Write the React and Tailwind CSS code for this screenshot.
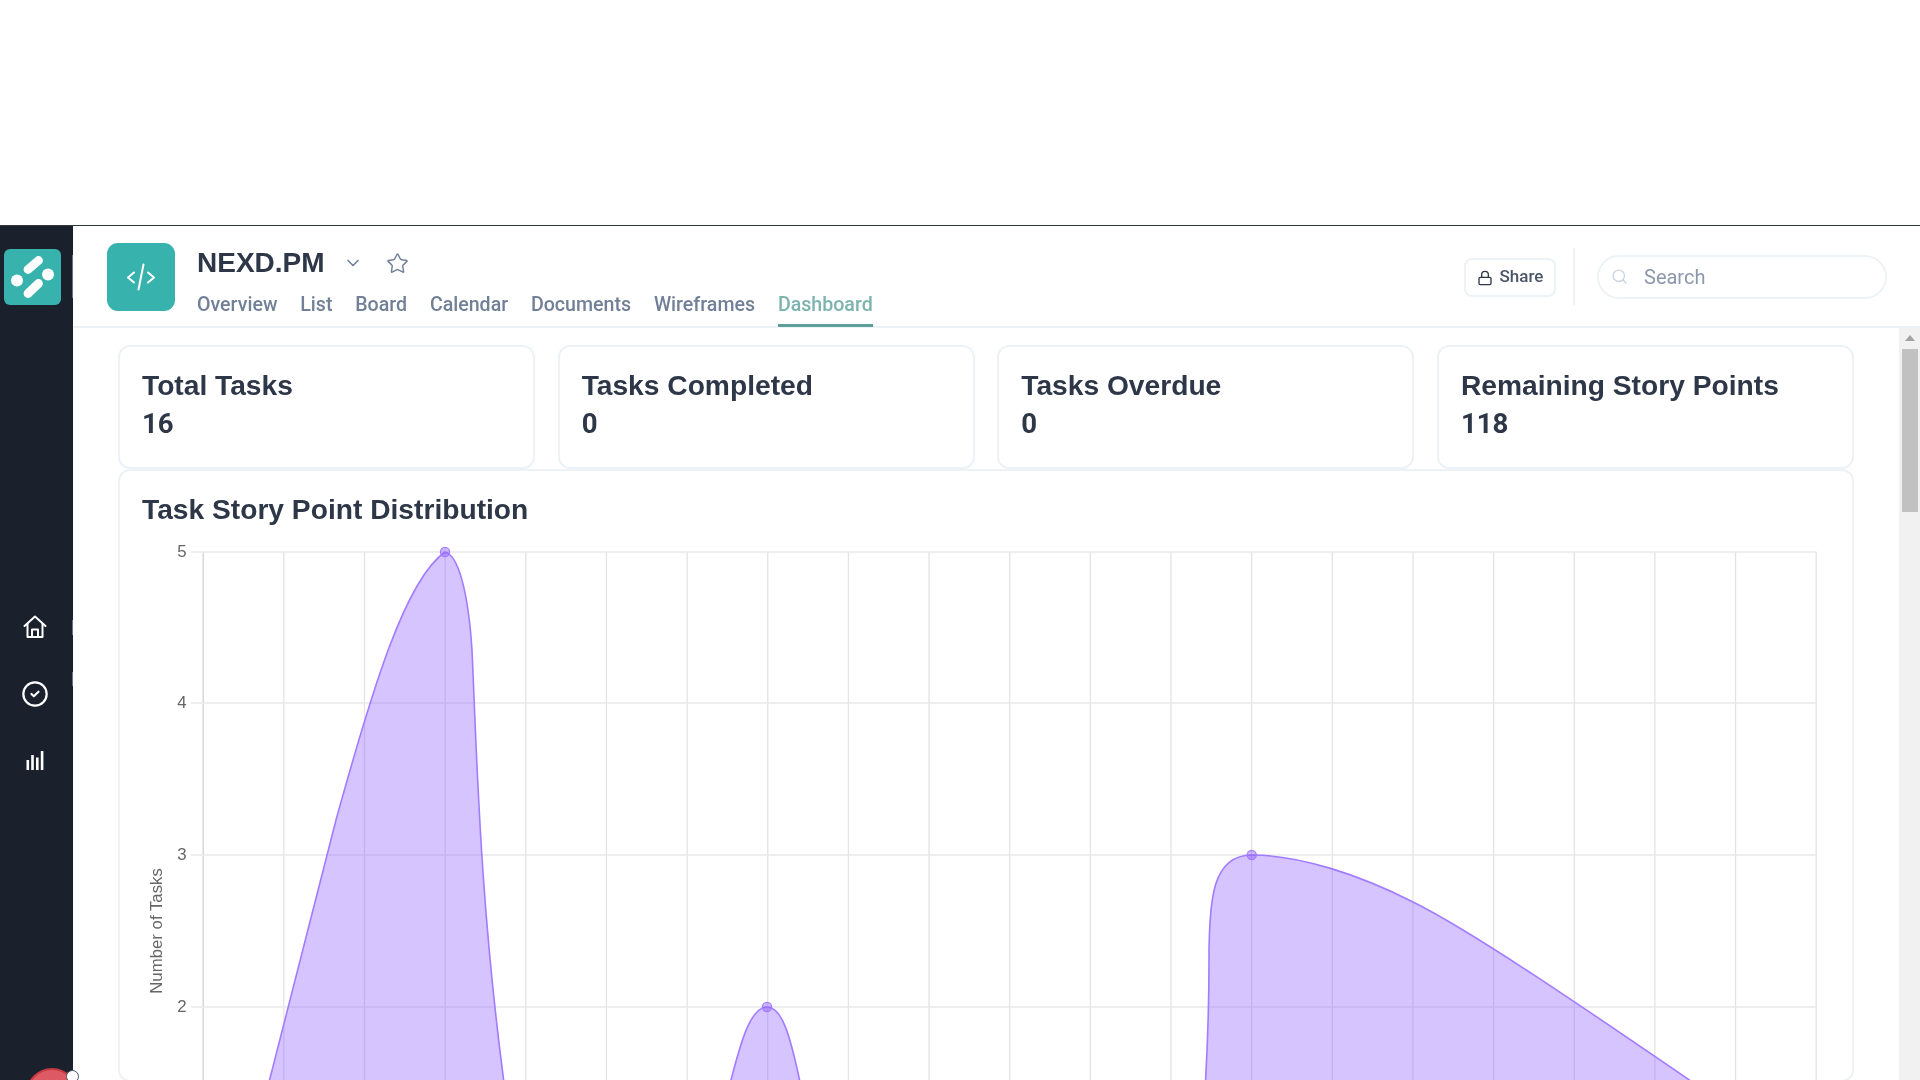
import React from "react";
import { ChevronDown, Star, Lock, Search, CircleCheck } from "lucide-react";

const tabs = ["Overview", "List", "Board", "Calendar", "Documents", "Wireframes", "Dashboard"];
const stats = [
  ["Total Tasks", "16"],
  ["Tasks Completed", "0"],
  ["Tasks Overdue", "0"],
  ["Remaining Story Points", "118"],
];
const gridX = Array.from({ length: 21 }, (_, i) => 203.2 + i * 80.65);
const ticks = [
  [5, 552],
  [4, 703],
  [3, 855],
  [2, 1007],
];
const peaks = [
  "M267 1090 L336 820 C372 690 405 580 445 552 C458 555 468 590 472 650 C477 760 480 905 505 1090 Z",
  "M728 1090 L730.5 1082 C740 1045 750 1007 767 1007 C782 1007 790 1035 800 1082 L803 1090 Z",
  "M1205 1090 C1208 1040 1209 1000 1209 960 C1209 900 1212 855 1251.7 855 C1300 855 1360 875 1413 902 C1470 930 1580 1005 1704 1090 Z",
];

function Chart() {
  return (
    <svg viewBox="120 529 1732 551" width="1732" height="551" className="block shrink-0">
      {gridX.map((x, i) => (
        <line key={x} x1={x} x2={x} y1="552" y2="1080" stroke={i === 0 ? "#d2d2d2" : "#e3e3e3"} strokeWidth="1.3" />
      ))}
      {ticks.map(([v, y]) => (
        <g key={v}>
          <line x1="191" x2="1816.5" y1={y} y2={y} stroke="#e8e8e8" strokeWidth="1.3" />
          <text x="186.5" y={y + 4.5} textAnchor="end" fontSize="16.8" fill="#666" fontFamily="'Liberation Sans', sans-serif">
            {v}
          </text>
        </g>
      ))}
      <text
        transform="translate(162 931) rotate(-90)"
        textAnchor="middle"
        fontSize="16.8"
        fill="#666"
        fontFamily="'Liberation Sans', sans-serif"
      >
        Number of Tasks
      </text>
      {peaks.map((d) => (
        <path key={d} d={d} fill="rgba(133,82,255,0.34)" stroke="#a27cff" strokeWidth="1.6" />
      ))}
      {[
        [445, 552],
        [767, 1007],
        [1251.7, 855],
      ].map(([cx, cy]) => (
        <circle key={cx} cx={cx} cy={cy} r="4.6" fill="rgba(139,92,246,0.45)" stroke="#a27cff" strokeWidth="1.2" />
      ))}
    </svg>
  );
}

function Logo() {
  return (
    <div className="ml-[4px] mt-[23px] h-[56px] w-[57px] rounded-[6px] bg-[#38b2ac]">
      <svg viewBox="0 0 57 56" width="57" height="56" className="block">
        <g stroke="#fff" strokeWidth="8.8" strokeLinecap="round">
          <line x1="24" y1="20.5" x2="34.5" y2="11.5" />
          <line x1="24" y1="44.5" x2="34.5" y2="34.5" />
        </g>
        <circle cx="13" cy="31.5" r="6" fill="#fff" />
        <circle cx="44" cy="25.5" r="6" fill="#fff" />
      </svg>
    </div>
  );
}

function Sidebar() {
  return (
    <aside className="relative flex h-full w-[73px] shrink-0 flex-col bg-[#1a202c]">
      <Logo />
      <div className="flex w-[70px] flex-col items-center pt-[310px]">
        <svg viewBox="0 0 24 24" width="24" height="24" fill="none" stroke="#fff" strokeWidth="2" strokeLinejoin="round" strokeLinecap="round">
          <path d="M1.5 11 12 1.5 22.5 11" />
          <path d="M4.5 9v13h15V9" />
          <path d="M9 22v-7.5h6V22" />
        </svg>
        <CircleCheck size={28} color="#fff" strokeWidth={1.9} className="mt-[41px]" />
        <svg viewBox="0 0 18 20" width="18" height="20" fill="#fff" className="mt-[42px]">
          <rect x="0.5" y="10" width="2.6" height="10" />
          <rect x="5.2" y="5" width="2.6" height="15" />
          <rect x="10" y="7.5" width="2.6" height="12.5" />
          <rect x="14.8" y="1" width="2.6" height="19" />
        </svg>
      </div>
      <div className="absolute left-[72px] top-[29px] h-[43px] w-[1px] bg-[#6b7280]" />
      <div className="absolute left-[72px] top-[394px] h-[15px] w-[1px] bg-[#6b7280]" />
      <div className="absolute left-[72px] top-[446px] h-[14px] w-[1px] bg-[#6b7280]" />
      <div className="absolute left-[26px] top-[842px] h-[52px] w-[52px] rounded-full border-2 border-[#c53b3f] bg-[#dd5a64]" />
      <div className="absolute left-[66px] top-[844px] z-10 h-[13px] w-[13px] rounded-full border border-[#4a5568] bg-white" />
    </aside>
  );
}

function Header() {
  return (
    <header className="flex h-[102px] shrink-0 items-start border-b-2 border-[#edf2f7] pl-[34px] pr-[33px]">
      <div className="mt-[17px] flex h-[68px] w-[68px] shrink-0 items-center justify-center rounded-[11px] bg-[#38b2ac]">
        <svg viewBox="0 0 30 28" width="30" height="28" fill="none" stroke="#fff" strokeWidth="2" strokeLinecap="round" strokeLinejoin="round">
          <path d="M8 9.5 2 14.5 8 19.5" />
          <path d="M22 9.5 28 14.5 22 19.5" />
          <path d="M17.5 1.5 12.5 26.5" />
        </svg>
      </div>
      <div className="ml-[22px] flex flex-col">
        <div className="mt-[20px] flex h-[34px] items-center">
          <h1 className="text-[28px] font-bold leading-[34px] text-[#2d3748] font-['Liberation_Sans',sans-serif]">NEXD.PM</h1>
          <ChevronDown size={20} color="#718096" strokeWidth={2} className="ml-[18px]" />
          <Star size={23} color="#718096" strokeWidth={1.5} className="ml-[23px]" />
        </div>
        <nav className="mt-[6px] flex gap-[22.8px] font-['Roboto',sans-serif] text-[19.6px] leading-[38px]">
          {tabs.map((t) =>
            t === "Dashboard" ? (
              <span key={t} className="h-[41px] border-b-[3px] border-[#5e9e98] font-medium text-[#7db3ae]">
                {t}
              </span>
            ) : (
              <span key={t} className="h-[41px] font-medium text-[#718096]">
                {t}
              </span>
            )
          )}
        </nav>
      </div>
      <div className="ml-auto mt-[22px] flex h-[57px] items-center">
        <button className="mt-[2px] flex h-[39px] w-[92px] items-center justify-center gap-[7px] rounded-[8px] border-2 border-[#edf2f7] font-['Roboto',sans-serif] text-[17px] font-medium text-[#4a5568]">
          <Lock size={16} color="#2d3748" strokeWidth={2} />
          <span className="-mt-[2px]">Share</span>
        </button>
        <div className="ml-[17px] h-full w-[2px] bg-[#edf2f7]" />
        <div className="ml-[22px] flex h-[44px] w-[290px] items-center rounded-full border-2 border-[#edf2f7] pl-[12px]">
          <Search size={17} color="#cbd5e0" strokeWidth={2} />
          <span className="ml-[16px] font-['Roboto',sans-serif] text-[20px] text-[#8c97ab]">Search</span>
        </div>
      </div>
    </header>
  );
}

function Scrollbar() {
  return (
    <div className="flex w-[21px] shrink-0 flex-col items-center bg-[#f1f1f1]">
      <div className="mt-[7px] h-0 w-0 border-x-[5px] border-b-[6px] border-x-transparent border-b-[#a3a3a3]" />
      <div className="ml-[1px] mt-[8px] h-[163px] w-[16px] bg-[#c1c1c1]" />
    </div>
  );
}

export default function App() {
  return (
    <div className="flex h-screen w-full flex-col overflow-hidden bg-white blur-[0.4px]">
      <div className="h-[226px] shrink-0 border-b-[1.5px] border-[#2f383c]" />
      <div className="flex min-h-0 flex-1">
        <Sidebar />
        <main className="flex min-w-0 flex-1 flex-col">
          <Header />
          <div className="flex min-h-0 flex-1">
            <div className="min-w-0 flex-1 overflow-hidden px-[45px] pt-[17px] text-[#2d3748]">
              <div className="grid grid-cols-4 gap-x-[22.5px]">
                {stats.map(([label, value]) => (
                  <div key={label} className="h-[124px] rounded-[12px] border-2 border-[#edf2f7] px-[22px] pt-[19px] font-bold leading-[38px]">
                    <div className="font-['Liberation_Sans',sans-serif] text-[28.2px]">{label}</div>
                    <div className="mt-[1px] font-['Roboto',sans-serif] text-[27.6px]">{value}</div>
                  </div>
                ))}
              </div>
              <section className="rounded-[12px] border-2 border-[#edf2f7] pt-[19px]">
                <h2 className="pl-[22px] font-['Liberation_Sans',sans-serif] text-[28.2px] font-bold leading-[38px]">Task Story Point Distribution</h2>
                <div className="mt-[1px]">
                  <Chart />
                </div>
              </section>
            </div>
            <Scrollbar />
          </div>
        </main>
      </div>
    </div>
  );
}
